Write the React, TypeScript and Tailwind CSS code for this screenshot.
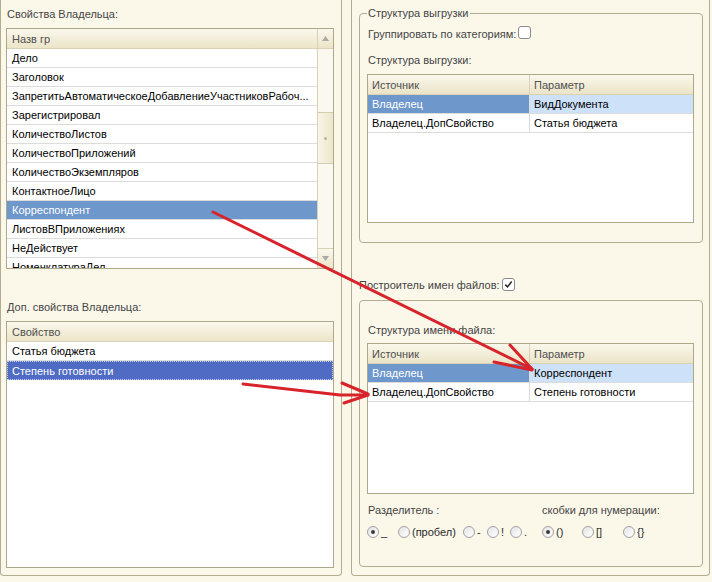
import React from "react";

const headerBg = "bg-gradient-to-b from-[#fbf8ec] to-[#ebe4c8]";

function Checkbox({ checked }: { checked?: boolean }) {
  return (
    <span className="inline-flex h-[13px] w-[13px] shrink-0 items-center justify-center rounded-[3px] border border-[#8a8a8a] bg-white">
      {checked && (
        <svg width="9" height="9" viewBox="0 0 9 9">
          <path d="M1.3 4.6 L3.5 6.9 L7.7 1.6" fill="none" stroke="#2d2d2d" strokeWidth="1.6" />
        </svg>
      )}
    </span>
  );
}

function Radio({ checked }: { checked?: boolean }) {
  return (
    <span className="inline-flex h-[12px] w-[12px] shrink-0 items-center justify-center rounded-full border border-[#a0a0a0] bg-gradient-to-br from-[#e4e4e4] to-white">
      {checked && <span className="h-[4px] w-[4px] rounded-full bg-[#3c3c3c]" />}
    </span>
  );
}

function LeftTable() {
  const rows = [
    "Дело",
    "Заголовок",
    "ЗапретитьАвтоматическоеДобавлениеУчастниковРабоч...",
    "Зарегистрировал",
    "КоличествоЛистов",
    "КоличествоПриложений",
    "КоличествоЭкземпляров",
    "КонтактноеЛицо",
    "Корреспондент",
    "ЛистовВПриложениях",
    "НеДействует",
    "НоменклатураДел",
  ];
  return (
    <div className="flex h-[241px] w-[328px] shrink-0 border border-[#aea88b] bg-white">
      <div className="flex w-[310px] flex-col overflow-hidden">
        <div className={`flex h-[20px] shrink-0 items-center border-b border-[#d8d2b6] pl-[5px] text-[#505050] ${headerBg}`}>
          Назв гр
        </div>
        {rows.map((r, i) => (
          <div
            key={i}
            className={`flex h-[19px] shrink-0 items-center whitespace-nowrap border-b border-[#dcdcdc] pl-[5px] ${
              i === 8 ? "bg-[#6e97cb] text-white" : "text-black"
            }`}
          >
            {r}
          </div>
        ))}
      </div>
      <div className="flex w-[16px] flex-col border-l border-[#d8d2b6]">
        <div className={`flex h-[20px] shrink-0 items-center justify-center border-b border-[#d8d2b6] ${headerBg}`}>
          <svg width="7" height="5" viewBox="0 0 7 5">
            <path d="M3.5 0 L7 5 L0 5 Z" fill="#a9a9a9" />
          </svg>
        </div>
        <div className="h-[63px] shrink-0 bg-[#faf8ef]" />
        <div className="flex h-[52px] shrink-0 items-center justify-center border-y border-[#d3ccad] bg-gradient-to-r from-[#f8f5e6] to-[#ece6cc]">
          <span className="h-[3px] w-[3px] rounded-full bg-[#b8b29a]" />
        </div>
        <div className="flex-1 bg-[#faf8ef]" />
        <div className={`flex h-[20px] shrink-0 items-center justify-center border-t border-[#d8d2b6] ${headerBg}`}>
          <svg width="7" height="5" viewBox="0 0 7 5">
            <path d="M0 0 L7 0 L3.5 5 Z" fill="#a9a9a9" />
          </svg>
        </div>
      </div>
    </div>
  );
}

function PropsTable() {
  return (
    <div className="flex h-[247px] w-[328px] shrink-0 flex-col border border-[#aea88b] bg-white">
      <div className={`flex h-[20px] shrink-0 items-center border-b border-[#d8d2b6] pl-[5px] text-[#505050] ${headerBg}`}>
        Свойство
      </div>
      <div className="flex h-[19px] shrink-0 items-center border-b border-[#dcdcdc] pl-[5px] text-black">Статья бюджета</div>
      <div className="flex h-[19px] shrink-0 items-center bg-[#4f6bc3] pl-[5px] text-white outline-1 -outline-offset-1 outline-dotted outline-[#c9d2ee]">
        Степень готовности
      </div>
    </div>
  );
}

type Row = { a: string; b: string; sel?: boolean };

function RTable({ rows, h }: { rows: Row[]; h: string }) {
  return (
    <div className={`flex w-[327px] shrink-0 flex-col border border-[#aea88b] bg-white ${h}`}>
      <div className={`flex h-[20px] shrink-0 border-b border-[#d8d2b6] text-[#505050] ${headerBg}`}>
        <div className="flex w-[162px] items-center border-r border-[#d8d2b6] pl-[4px]">Источник</div>
        <div className="flex flex-1 items-center pl-[4px]">Параметр</div>
      </div>
      {rows.map((r, i) => (
        <div key={i} className="flex h-[19px] shrink-0 border-b border-[#dcdcdc]">
          <div
            className={`flex w-[162px] items-center border-r border-[#dcdcdc] pl-[4px] ${
              r.sel ? "bg-[#6e97cb] text-white" : "text-black"
            }`}
          >
            {r.a}
          </div>
          <div className={`flex flex-1 items-center pl-[4px] text-black ${r.sel ? "bg-[#cde2f9]" : ""}`}>{r.b}</div>
        </div>
      ))}
    </div>
  );
}

function RadioItem({ w, label, checked }: { w: string; label: string; checked?: boolean }) {
  return (
    <div className={`flex shrink-0 items-center gap-[2px] ${w}`}>
      <Radio checked={checked} />
      <span className="text-[#2a2a2a]">{label}</span>
    </div>
  );
}

export default function App() {
  return (
    <div className="relative h-[582px] w-[712px] overflow-hidden bg-[#fbf8ea] font-['Liberation_Sans',Arial,sans-serif] text-[11px] leading-[14px]">
      <div className="flex items-start">
        {/* Left panel */}
        <div className="flex h-[576px] w-[342px] shrink-0 flex-col rounded-b-[4px] border-x border-b border-[#b3ad90] pl-[5px]">
          <div className="flex h-[28px] shrink-0 items-center pl-[1px] text-[#454545]">Свойства Владельца:</div>
          <LeftTable />
          <div className="flex h-[52px] shrink-0 items-end pb-[7px] pl-[1px] text-[#454545]">Доп. свойства Владельца:</div>
          <PropsTable />
        </div>

        {/* Right panel */}
        <div className="ml-[9px] flex h-[576px] w-[359px] shrink-0 flex-col rounded-b-[4px] border-x border-b border-[#b3ad90] pl-[7px] pt-[6px]">
          <fieldset className="w-[344px] shrink-0 rounded-[4px] border border-[#b3ad90] px-[7px] pb-[19px]">
            <legend className="px-[1px] text-[#454545]">Структура выгрузки</legend>
            <div className="mt-[7px] flex h-[14px] items-center pl-[1px] text-[#454545]">
              <span>Группировать по категориям:</span>
              <span className="ml-[2px]">
                <Checkbox />
              </span>
            </div>
            <div className="mt-[12px] h-[14px] pl-[1px] text-[#454545]">Структура выгрузки:</div>
            <div className="mt-[7px]">
              <RTable
                h="h-[149px]"
                rows={[
                  { a: "Владелец", b: "ВидДокумента", sel: true },
                  { a: "Владелец.ДопСвойство", b: "Статья бюджета" },
                ]}
              />
            </div>
          </fieldset>

          <div className="mt-[35px] flex h-[14px] shrink-0 items-center text-[#454545]">
            <span>Построитель имен файлов:</span>
            <span className="ml-[2px]">
              <Checkbox checked />
            </span>
          </div>

          <div className="mt-[8px] flex h-[267px] w-[344px] shrink-0 flex-col rounded-[4px] border border-[#b3ad90] px-[7px] pt-[22px]">
            <div className="h-[14px] pl-[1px] text-[#454545]">Структура имени файла:</div>
            <div className="mt-[6px]">
              <RTable
                h="h-[151px]"
                rows={[
                  { a: "Владелец", b: "Корреспондент", sel: true },
                  { a: "Владелец.ДопСвойство", b: "Степень готовности" },
                ]}
              />
            </div>
            <div className="mt-[9px] flex h-[14px] pl-[1px] text-[#454545]">
              <span className="w-[174px]">Разделитель :</span>
              <span>скобки для нумерации:</span>
            </div>
            <div className="mt-[8px] flex h-[14px] items-center">
              <RadioItem w="w-[31px]" label="_" checked />
              <RadioItem w="w-[65px]" label="(пробел)" />
              <RadioItem w="w-[24px]" label="-" />
              <RadioItem w="w-[23px]" label="!" />
              <RadioItem w="w-[32px]" label="." />
              <RadioItem w="w-[40px]" label="()" checked />
              <RadioItem w="w-[41px]" label="[]" />
              <RadioItem w="w-[40px]" label="{}" />
            </div>
          </div>
        </div>
      </div>

      {/* Red annotation arrows */}
      <svg className="pointer-events-none absolute left-0 top-0" width="712" height="582" viewBox="0 0 712 582">
        <g stroke="#d8232b" strokeWidth="3" strokeLinecap="round" fill="none">
          <path d="M213 212 L532 369" />
          <path d="M510 345 L532 369" />
          <path d="M494 362 L532 370" />
          <path d="M243 384 L340 395 L368 395" />
          <path d="M342 383 L368 394" />
          <path d="M344 403 L368 395" />
        </g>
      </svg>
    </div>
  );
}
